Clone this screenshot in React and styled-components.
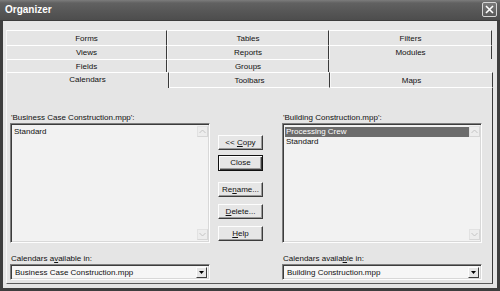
import React from 'react';
import styled, { createGlobalStyle } from 'styled-components';

const Global = createGlobalStyle`
  html, body { margin: 0; padding: 0; background: #e5e5e5; }
  body {
    font-family: "Liberation Sans", Arial, sans-serif;
    font-size: 8px;
    color: #111;
  }
`;

const Window = styled.div`
  width: 500px;
  height: 291px;
  display: flex;
  flex-direction: column;
  background: #e5e5e5;
  overflow: hidden;
`;

const TitleBar = styled.div`
  height: 21px;
  flex: none;
  box-sizing: border-box;
  display: flex;
  align-items: center;
  justify-content: space-between;
  padding: 0 3px 1px 5px;
  background: linear-gradient(#7c7c7c 0, #616161 3px, #575757 55%, #4d4d4d 100%);
  border-bottom: 1px solid #3a3a3a;
  color: #fff;
  font-size: 10px;
  font-weight: bold;
`;

const CloseBox = styled.div`
  width: 15px;
  height: 15px;
  box-sizing: border-box;
  border: 1px solid #d6d6d6;
  border-radius: 2px;
  background: linear-gradient(#7a7a7a, #5a5a5a);
  display: flex;
  align-items: center;
  justify-content: center;
`;

const Frame = styled.div`
  flex: 1;
  display: flex;
  flex-direction: column;
  box-sizing: border-box;
  border: 3px solid #3e3e3e;
  border-top: none;
  padding: 9px 4px 4px 3px;
`;

const TabRow = styled.div`
  display: flex;
  height: ${p => p.h}px;
  flex: none;
`;

const Tab = styled.div`
  width: ${p => p.w}px;
  flex: none;
  box-sizing: border-box;
  border-top: 1px solid #fff;
  border-left: 1px solid #f6f6f6;
  border-right: 1px solid #3a3a3a;
  border-bottom: ${p => (p.front && !p.active ? '1px solid #fff' : 'none')};
  display: flex;
  align-items: center;
  justify-content: center;
  padding-bottom: ${p => (p.active ? '2px' : '0')};
`;

const Panel = styled.div`
  flex: 1;
  box-sizing: border-box;
  border-left: 1px solid #f6f6f6;
  border-right: 1px solid #3a3a3a;
  border-bottom: 1px solid #5a5a5a;
  padding: 25px 0 0 3px;
`;

const Grid = styled.div`
  display: grid;
  grid-template-columns: 200px 8px 45px 19px 200px;
  grid-template-rows: 10px 120px 21px 16px;
  grid-template-areas:
    "llabel . . . rlabel"
    "llist . btns . rlist"
    "lcal . . . rcal"
    "ldrop . . . rdrop";
`;

const Label = styled.div`
  grid-area: ${p => p.area};
  align-self: end;
  line-height: ${p => (p.tall ? 11 : 10)}px;
  padding-left: 1px;
  white-space: nowrap;
`;

const Sunken = styled.div`
  box-sizing: border-box;
  border: 1px solid;
  border-color: #7e7e7e #fdfdfd #fdfdfd #7e7e7e;
  box-shadow: inset 1px 1px 0 #3c3c3c, inset -1px -1px 0 #d8d8d8;
`;

const ListBox = styled(Sunken)`
  grid-area: ${p => p.area};
  background: #f2f2f2;
  display: flex;
  padding: 2px 1px 2px 2px;
`;

const Items = styled.div`
  flex: 1;
  padding-top: 1px;
`;

const Item = styled.div`
  height: 10px;
  line-height: 10px;
  padding-left: 1px;
  background: ${p => (p.selected ? '#6c6c6c' : 'transparent')};
  color: ${p => (p.selected ? '#fff' : '#111')};
`;

const ScrollBar = styled.div`
  width: 11px;
  display: flex;
  flex-direction: column;
  justify-content: space-between;
`;

const ScrollArrow = styled.div`
  height: 11px;
  box-sizing: border-box;
  border: 1px solid #e2e2e2;
  border-right-color: #d6d6d6;
  border-bottom-color: #d6d6d6;
  background: #ededed;
  display: flex;
  align-items: center;
  justify-content: center;
`;

const Buttons = styled.div`
  grid-area: btns;
  display: flex;
  flex-direction: column;
  padding-top: 12px;
`;

const Button = styled.div`
  height: ${p => (p.isDefault ? 16 : 15)}px;
  margin-top: ${p => p.gap}px;
  box-sizing: border-box;
  background: #e6e6e6;
  border: 1px solid;
  border-color: ${p => (p.isDefault ? '#111' : '#fdfdfd #3c3c3c #3c3c3c #fdfdfd')};
  box-shadow: ${p =>
    p.isDefault
      ? 'inset 1px 1px 0 #fdfdfd, inset -1px -1px 0 #3c3c3c, inset -2px -2px 0 #9a9a9a'
      : 'inset -1px -1px 0 #9a9a9a'};
  display: flex;
  align-items: center;
  justify-content: center;
  padding-bottom: 1px;
  white-space: pre;
`;

const Select = styled(Sunken)`
  grid-area: ${p => p.area};
  background: #f6f6f6;
  display: flex;
  align-items: center;
  padding: 2px 2px 2px 4px;
`;

const SelectText = styled.div`
  flex: 1;
  white-space: nowrap;
`;

const DropButton = styled.div`
  width: 11px;
  height: 11px;
  box-sizing: border-box;
  background: #e6e6e6;
  border: 1px solid;
  border-color: #fdfdfd #3c3c3c #3c3c3c #fdfdfd;
  display: flex;
  align-items: center;
  justify-content: center;
`;

const Chevron = ({ down }) => (
  <svg width="7" height="5" viewBox="0 0 7 5">
    <polyline
      points={down ? '0.5,1 3.5,4 6.5,1' : '0.5,4 3.5,1 6.5,4'}
      fill="none"
      stroke="#c4c4c4"
      strokeWidth="1"
    />
  </svg>
);

const List = ({ area, items, selected }) => (
  <ListBox area={area}>
    <Items>
      {items.map(it => (
        <Item key={it} selected={it === selected}>{it}</Item>
      ))}
    </Items>
    <ScrollBar>
      <ScrollArrow><Chevron /></ScrollArrow>
      <ScrollArrow><Chevron down /></ScrollArrow>
    </ScrollBar>
  </ListBox>
);

const Dropdown = ({ area, value }) => (
  <Select area={area}>
    <SelectText>{value}</SelectText>
    <DropButton>
      <svg width="5" height="3" viewBox="0 0 5 3">
        <polygon points="0,0 5,0 2.5,3" fill="#000" />
      </svg>
    </DropButton>
  </Select>
);

const tabRows = [
  { h: 15, tabs: [['Forms', 161], ['Tables', 162], ['Filters', 163]] },
  { h: 14, tabs: [['Views', 161], ['Reports', 162], ['Modules', 163]] },
  { h: 13, tabs: [['Fields', 161], ['Groups', 162]] },
  { h: 16, front: true, tabs: [['Calendars', 163], ['Toolbars', 161], ['Maps', 163]] },
];

export default function App() {
  return (
    <>
      <Global />
      <Window>
        <TitleBar>
          <span>Organizer</span>
          <CloseBox>
            <svg width="9" height="9" viewBox="0 0 9 9">
              <path d="M1 1 L8 8 M8 1 L1 8" stroke="#fff" strokeWidth="1.6" />
            </svg>
          </CloseBox>
        </TitleBar>
        <Frame>
          {tabRows.map((row, i) => (
            <TabRow key={i} h={row.h}>
              {row.tabs.map(([name, w]) => (
                <Tab key={name} w={w} front={row.front} active={name === 'Calendars'}>
                  {name}
                </Tab>
              ))}
            </TabRow>
          ))}
          <Panel>
            <Grid>
              <Label area="llabel">'Business Case Construction.mpp':</Label>
              <Label area="rlabel">'Building Construction.mpp':</Label>
              <List area="llist" items={['Standard']} />
              <Buttons>
                <Button gap={0}>{'<< '}<u>C</u>opy</Button>
                <Button gap={5} isDefault>Close</Button>
                <Button gap={11}>Re<u>n</u>ame...</Button>
                <Button gap={7}><u>D</u>elete...</Button>
                <Button gap={7}><u>H</u>elp</Button>
              </Buttons>
              <List area="rlist" items={['Processing Crew', 'Standard']} selected="Processing Crew" />
              <Label area="lcal" tall>Calendars a<u>v</u>ailable in:</Label>
              <Label area="rcal" tall>Calendars availa<u>b</u>le in:</Label>
              <Dropdown area="ldrop" value="Business Case Construction.mpp" />
              <Dropdown area="rdrop" value="Building Construction.mpp" />
            </Grid>
          </Panel>
        </Frame>
      </Window>
    </>
  );
}
